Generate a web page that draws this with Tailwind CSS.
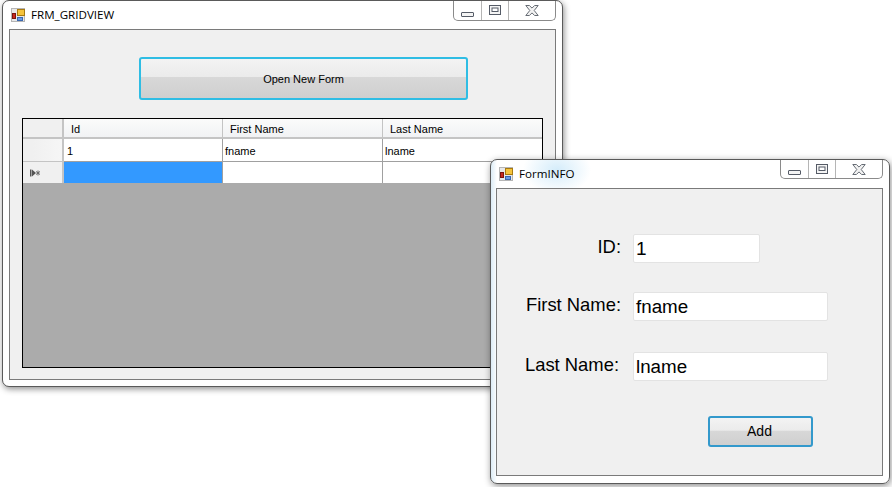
<!DOCTYPE html>
<html lang="en">
<head>
<meta charset="utf-8"/>
<title>FRM_GRIDVIEW</title>
<script src="https://cdn.jsdelivr.net/npm/@tailwindcss/browser@4"></script>
</head>
<body class="relative w-[892px] h-[487px] overflow-hidden bg-white font-['Liberation_Sans',sans-serif] text-[11px] text-black">

<!-- main window -->
<div class="absolute left-[2px] top-0 w-[561px] h-[387px] flex flex-col px-[6px] pb-[6px] bg-white border border-[#5a5a5a] rounded-[7px] shadow-[1px_2px_6px_rgba(0,0,0,0.45)]">
  <div class="h-[28px] shrink-0 flex">
    <svg class="mt-[7px] ml-[2px] w-[15px] h-[15px]" viewBox="0 0 15 15">
      <rect x="0.500" y="0.500" width="13" height="13" fill="#e8e8e8" stroke="#b5b5b5"/>
      <rect x="6.500" y="1.500" width="7" height="6" fill="#f5c33c" stroke="#a87a10"/>
      <rect x="1.500" y="5.500" width="3" height="5" fill="#c8281e" stroke="#7a1510"/>
      <rect x="6.500" y="9.500" width="5" height="3" fill="#6a9de6" stroke="#3a68b0"/>
    </svg>
    <span class="ml-[5px] mt-[6px] font-['Open_Sans',sans-serif] text-[11.6px] leading-[15px]">FRM_GRIDVIEW</span>
    <div class="ml-auto h-[20px] w-[103px] flex border border-t-0 border-[#8a8a8a] rounded-b-[5px] bg-white">
      <div class="w-[28px] flex items-center justify-center border-r border-[#b5b5b5]">
        <svg width="13" height="5" class="mt-[7px]" viewBox="0 0 13 5"><rect x="0.500" y="0.500" width="12" height="4" rx="0.500" fill="#f4f4f4" stroke="#555b66"/></svg>
      </div>
      <div class="w-[27px] flex items-center justify-center border-r border-[#b5b5b5]">
        <svg width="12" height="10" class="-mt-[1px]" viewBox="0 0 12 10"><rect x="0.500" y="0.500" width="11" height="9" fill="#f4f4f4" stroke="#555b66"/><rect x="3" y="3" width="6" height="3.500" fill="#fff" stroke="#555b66"/></svg>
      </div>
      <div class="flex-1 flex items-center justify-center">
        <svg width="14" height="11" class="-mt-[1px] -ml-[1px]" viewBox="0 0 14 11"><path d="M0.800 0.500h3.600l2.600 2.600L9.600 0.500h3.600L9.200 5.500l4 5H9.600L7 7.900 4.400 10.500H0.800l4-5z" fill="#f2f2f2" stroke="#666c74"/></svg>
      </div>
    </div>
  </div>
  <div class="flex-1 border border-[#7a7a7a] bg-[#f0f0f0] pl-[12px] pt-[27px]">
    <button class="ml-[117px] w-[329px] h-[43px] block pt-[1px] border-2 border-[#2fbde4] rounded-[3px] bg-[linear-gradient(#f3f3f3_0%,#ebebeb_46%,#d8d8d8_47%,#cfcfcf_100%)] text-[11px]">Open New Form</button>
    <div class="mt-[18px] w-[521px] h-[250px] border border-black bg-[#ababab] grid grid-cols-[41px_159px_160px_159px] grid-rows-[20px_23px_21px] content-start">
      <div class="bg-[#f0f0f0] border-r-2 border-b-2 border-[#c4c4c4]"></div>
      <div class="bg-[linear-gradient(#fbfbfb,#f1f2f4)] border-r border-b-2 border-[#c4c4c4] pl-[7px] leading-[21px]">Id</div>
      <div class="bg-[linear-gradient(#fbfbfb,#f1f2f4)] border-r border-b-2 border-[#c4c4c4] pl-[7px] leading-[21px]">First Name</div>
      <div class="bg-[linear-gradient(#fbfbfb,#f1f2f4)] border-b-2 border-[#c4c4c4] pl-[7px] leading-[21px]">Last Name</div>

      <div class="bg-[linear-gradient(90deg,#f0f0f0_25%,#f6f6f6_100%)] border-r-2 border-b border-[#c4c4c4]"></div>
      <div class="bg-white border-r border-b border-[#a0a0a0] pl-[3px] leading-[24px]">1</div>
      <div class="bg-white border-r border-b border-[#a0a0a0] pl-[2px] leading-[24px]">fname</div>
      <div class="bg-white border-b border-[#a0a0a0] pl-[2px] leading-[24px]">lname</div>

      <div class="bg-[#f0f0f0] border-r-2 border-[#c4c4c4] flex items-center pl-[7px]">
        <svg width="11" height="8" viewBox="0 0 11 8"><path d="M0 0.500h1.500v7H0zM2 0.500l4 3.500-4 3.500z" fill="#555"/><path d="M8 1.500v5M6 2.500l4 3M10 2.500l-4 3" stroke="#666" stroke-width="1"/></svg>
      </div>
      <div class="bg-[#3399ff] border-r border-[#a0a0a0]"></div>
      <div class="bg-white border-r border-[#a0a0a0]"></div>
      <div class="bg-white"></div>
    </div>
  </div>
</div>

<!-- dialog window -->
<div class="absolute left-[490px] top-[159px] w-[400px] h-[325px] flex flex-col pl-[5px] pr-[6px] pb-[7px] border border-[#5a5a5a] rounded-[7px] shadow-[1px_2px_7px_rgba(0,0,0,0.45)] bg-[radial-gradient(ellipse_34px_24px_at_66px_10px,#d4ecfa,transparent),linear-gradient(90deg,#dcecf6,#ffffff_6px)]">
  <div class="h-[28px] shrink-0 flex">
    <svg class="mt-[7px] ml-[3px] w-[15px] h-[15px]" viewBox="0 0 15 15">
      <rect x="0.500" y="0.500" width="13" height="13" fill="#e8e8e8" stroke="#b5b5b5"/>
      <rect x="6.500" y="1.500" width="7" height="6" fill="#f5c33c" stroke="#a87a10"/>
      <rect x="1.500" y="5.500" width="3" height="5" fill="#c8281e" stroke="#7a1510"/>
      <rect x="6.500" y="9.500" width="5" height="3" fill="#6a9de6" stroke="#3a68b0"/>
    </svg>
    <span class="ml-[5px] mt-[6px] font-['Open_Sans',sans-serif] text-[11.6px] leading-[15px]">FormINFO</span>
    <div class="ml-auto h-[19px] w-[103px] flex border border-t-0 border-[#8a8a8a] rounded-b-[5px] bg-white">
      <div class="w-[28px] flex items-center justify-center border-r border-[#b5b5b5]">
        <svg width="13" height="5" class="mt-[7px]" viewBox="0 0 13 5"><rect x="0.500" y="0.500" width="12" height="4" rx="0.500" fill="#f4f4f4" stroke="#555b66"/></svg>
      </div>
      <div class="w-[27px] flex items-center justify-center border-r border-[#b5b5b5]">
        <svg width="12" height="10" class="-mt-[1px]" viewBox="0 0 12 10"><rect x="0.500" y="0.500" width="11" height="9" fill="#f4f4f4" stroke="#555b66"/><rect x="3" y="3" width="6" height="3.500" fill="#fff" stroke="#555b66"/></svg>
      </div>
      <div class="flex-1 flex items-center justify-center">
        <svg width="14" height="11" class="-ml-[1px]" viewBox="0 0 14 11"><path d="M0.800 0.500h3.600l2.600 2.600L9.600 0.500h3.600L9.200 5.500l4 5H9.600L7 7.900 4.400 10.500H0.800l4-5z" fill="#f2f2f2" stroke="#666c74"/></svg>
      </div>
    </div>
  </div>
  <div class="flex-1 border border-[#7a7a7a] bg-[#f0f0f0] pt-[45px] text-[18.4px]">
    <div class="flex items-center h-[29px]">
      <span class="w-[124px] text-right leading-[24px] -mt-[3px]">ID:</span>
      <div class="ml-[12px] w-[127px] h-[29px] bg-white border border-[#e3e3e3] rounded-[2px] pl-[2px] text-[19px] leading-[27px]">1</div>
    </div>
    <div class="flex items-center h-[29px] mt-[29px]">
      <span class="w-[124px] text-right leading-[24px] -mt-[3px]">First Name:</span>
      <div class="ml-[12px] w-[195px] h-[29px] bg-white border border-[#e3e3e3] rounded-[2px] pl-[2px] text-[18.8px] leading-[27px]">fname</div>
    </div>
    <div class="flex items-center h-[29px] mt-[31px]">
      <span class="w-[122px] text-right leading-[24px] -mt-[3px]">Last Name:</span>
      <div class="ml-[14px] w-[195px] h-[29px] bg-white border border-[#e3e3e3] rounded-[2px] pl-[2px] text-[18.8px] leading-[27px]">lname</div>
    </div>
    <button class="block mt-[35px] ml-[211px] w-[105px] h-[31px] border-2 border-[#3399cc] rounded-[3px] bg-[linear-gradient(#f3f3f3_0%,#ebebeb_46%,#d8d8d8_47%,#cfcfcf_100%)] text-[14px] pr-[2px]">Add</button>
  </div>
</div>

</body>
</html>
